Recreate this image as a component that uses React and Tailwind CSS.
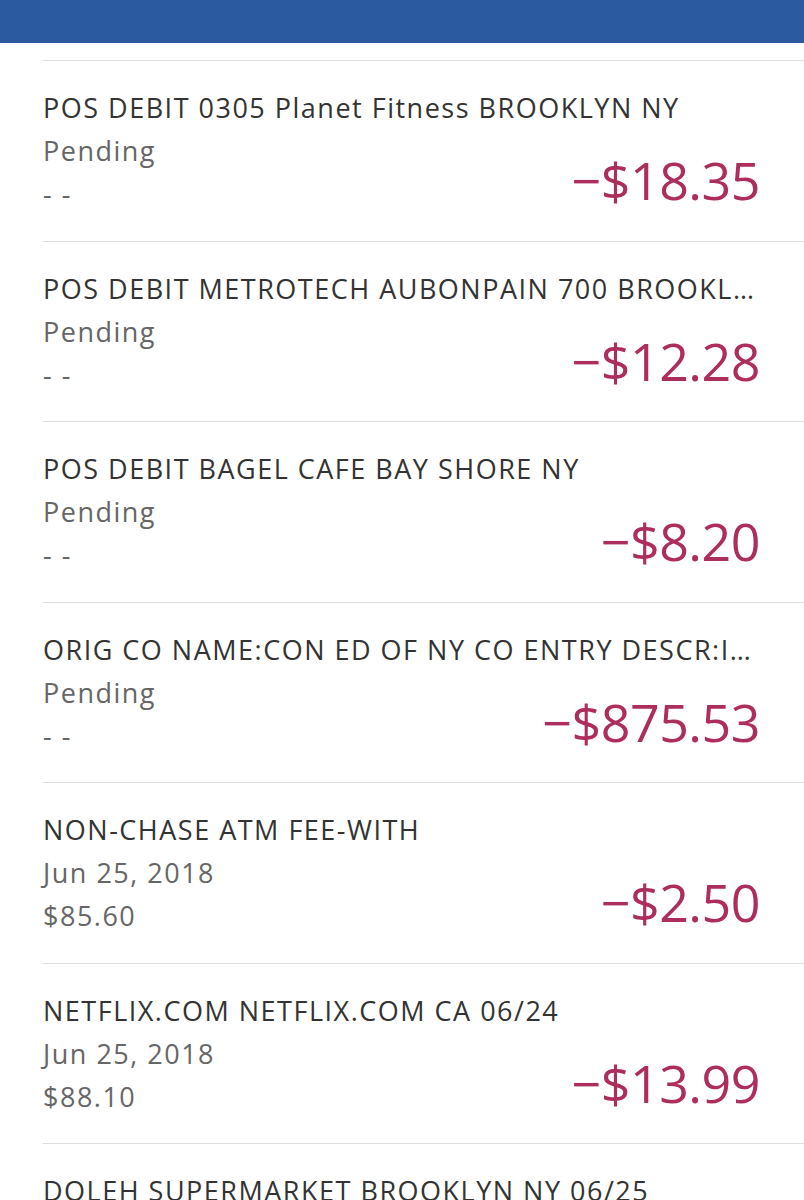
import React from 'react';

const transactions = [
    { name: 'POS DEBIT 0305 Planet Fitness BROOKLYN NY', date: 'Pending', balance: '- -', amount: '−$18.35' },
    { name: 'POS DEBIT METROTECH AUBONPAIN 700 BROOKLYN NY 06/26', date: 'Pending', balance: '- -', amount: '−$12.28' },
    { name: 'POS DEBIT BAGEL CAFE BAY SHORE NY', date: 'Pending', balance: '- -', amount: '−$8.20' },
    { name: 'ORIG CO NAME:CON ED OF NY CO ENTRY DESCR:INTELL CK', date: 'Pending', balance: '- -', amount: '−$875.53' },
    { name: 'NON-CHASE ATM FEE-WITH', date: 'Jun 25, 2018', balance: '$85.60', amount: '−$2.50' },
    { name: 'NETFLIX.COM NETFLIX.COM CA 06/24', date: 'Jun 25, 2018', balance: '$88.10', amount: '−$13.99' },
    { name: 'DOLEH SUPERMARKET BROOKLYN NY 06/25', date: 'Jun 25, 2018', balance: '$102.09', amount: '−$24.75' },
];

const App = () => {
    return (
        <div className="min-h-screen bg-white" style={{ fontFamily: '"Open Sans", sans-serif' }}>
            <div className="h-[43px] bg-[#2c5aa0]" />

            <div className="ml-[43px] pt-[17px]">
                {transactions.map((t, i) => (
                    <div key={i} className="border-t border-[#dddddd] pr-[44px] pt-[25px] pb-[25.5px]">
                        <div className="text-[27px] leading-[43px] tracking-[1.5px] text-[#333333] truncate">{t.name}</div>
                        <div className="flex items-end justify-between">
                            <div className="text-[27px] leading-[43px] tracking-[1.5px] text-[#666666]">
                                <div>{t.date}</div>
                                <div>{t.balance}</div>
                            </div>
                            <div className="text-[52px] leading-none tracking-[-0.5px] text-[#ad2d5d] mb-[9px]">{t.amount}</div>
                        </div>
                    </div>
                ))}
            </div>
        </div>
    );
};

export default App;
